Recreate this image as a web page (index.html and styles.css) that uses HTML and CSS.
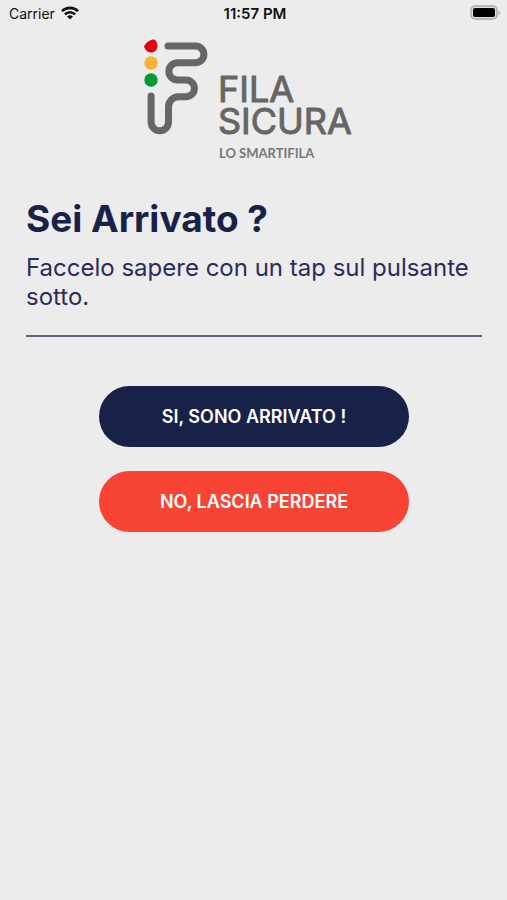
FILE: index.html
```html
<!DOCTYPE html>
<html lang="it">
<head>
  <meta charset="UTF-8">
  <meta name="viewport" content="width=device-width, initial-scale=1.0">
  <title>Fila Sicura</title>
  <link rel="stylesheet" href="styles.css">
</head>
<body>

  <div class="status-bar">
    <div class="carrier">
      <span>Carrier</span>
      <svg class="wifi" viewBox="0 0 18 14" width="18" height="14" aria-hidden="true">
        <path d="M1 5.200a11.300 11.300 0 0 1 16 0M3.900 8.300a7.200 7.200 0 0 1 10.200 0" fill="none" stroke="#111" stroke-width="2.6"/>
        <path d="M9 13.600 6 10.600a4.300 4.300 0 0 1 6 0z" fill="#111"/>
      </svg>
    </div>
    <div class="time">11:57 PM</div>
    <div class="battery">
      <svg viewBox="0 0 31 16" width="31" height="16" aria-hidden="true">
        <rect x="1" y="1" width="26" height="13" rx="4" fill="#dedede" stroke="#a9a9a9" stroke-width="1.4"/>
        <rect x="3" y="3" width="22" height="9" rx="2" fill="#000"/>
        <path d="M28.500 5.500a2.400 2.400 0 0 1 0 4.400z" fill="#a9a9a9"/>
      </svg>
    </div>
  </div>

  <header class="logo">
    <svg viewBox="4 0 220 126" width="220" height="126" role="img" aria-label="Fila Sicura, lo Smartifila">
      <!-- traffic light -->
      <path d="M4.500 9.500C6 7 9 4.200 12.500 3.500C15.500 3 17 5.500 17.500 9.500C17.500 14 14.500 16.500 11 16.500C8 16.500 6.500 15 4.800 12.500C4 11.500 4 10.500 4.500 9.500z" fill="#e3000f"/>
      <circle cx="11" cy="27" r="6.700" fill="#f9b233"/>
      <circle cx="11" cy="44" r="6.700" fill="#009a3d"/>
      <!-- queue line -->
      <path class="queue" d="M28 10H55.500a8.400 8.400 0 0 1 0 16.800H37.500a8.600 8.600 0 0 0 0 17.200H46a8.400 8.400 0 0 1 0 16.800H38.500a10 10 0 0 0-10 10V86a8.700 8.700 0 0 1-17.400 0V60"/>
      <text class="brand"><tspan x="78" y="66">FILA</tspan><tspan x="78" y="98">SICURA</tspan></text>
      <text class="tagline" x="79" y="122">LO SMARTIFILA</text>
    </svg>
  </header>

  <main class="content">
    <h1>Sei Arrivato ?</h1>
    <p class="message">Faccelo sapere con un tap sul pulsante sotto.</p>
    <hr>
    <div class="actions">
      <button type="button" class="btn btn-yes">SI, SONO ARRIVATO !</button>
      <button type="button" class="btn btn-no">NO, LASCIA PERDERE</button>
    </div>
  </main>

</body>
</html>
```
FILE: styles.css
```css
body {
  margin: 0;
  min-height: 100vh;
  background-color: #ececec;
  font-family: Inter, "Liberation Sans", sans-serif;
  color: #182148;
}
.status-bar {
  display: grid;
  grid-template-columns: 1fr auto 1fr;
  align-items: center;
  height: 26px;
  padding: 0 6px 0 9px;
  color: #111;
  font-size: 14px;
}
.carrier {
  display: flex;
  align-items: center;
  gap: 6px;
}
.time {
  font-size: 15px;
  font-weight: 600;
}
.battery {
  display: flex;
  justify-content: flex-end;
}
.logo {
  display: flex;
  justify-content: center;
  padding-top: 10px;
}
.queue {
  fill: none;
  stroke: #666;
  stroke-width: 7;
  stroke-linecap: round;
  stroke-linejoin: round;
}
/* the stroke rounds off the letter ends */
.brand {
  font-size: 36px;
  font-weight: 400;
  fill: #666;
  stroke: #666;
  stroke-width: 1;
  stroke-linejoin: round;
}
.tagline {
  font-family: Lato, sans-serif;
  font-size: 13px;
  font-weight: 700;
  fill: #777;
}
.content {
  padding: 35px 25px 0 26px;
}
h1 {
  margin: 0;
  font-size: 37px;
  line-height: 44px;
  font-weight: 700;
}
.message {
  margin: 12px 0 24px;
  font-size: 24px;
  line-height: 29px;
  color: #2a2c5c;
}
hr {
  margin: 0;
  border: 0;
  border-top: 2px solid #5f6382;
}
.actions {
  display: flex;
  flex-direction: column;
  align-items: center;
  gap: 24px;
  margin-top: 49px;
}
.btn {
  width: 68%;
  height: 61px;
  border: 0;
  border-radius: 31px;
  color: #fff;
  font-family: inherit;
  font-size: 18px;
  font-weight: 600;
  cursor: pointer;
}
.btn-yes {
  background-color: #182148;
}
.btn-no {
  background-color: #f74434;
}
```
